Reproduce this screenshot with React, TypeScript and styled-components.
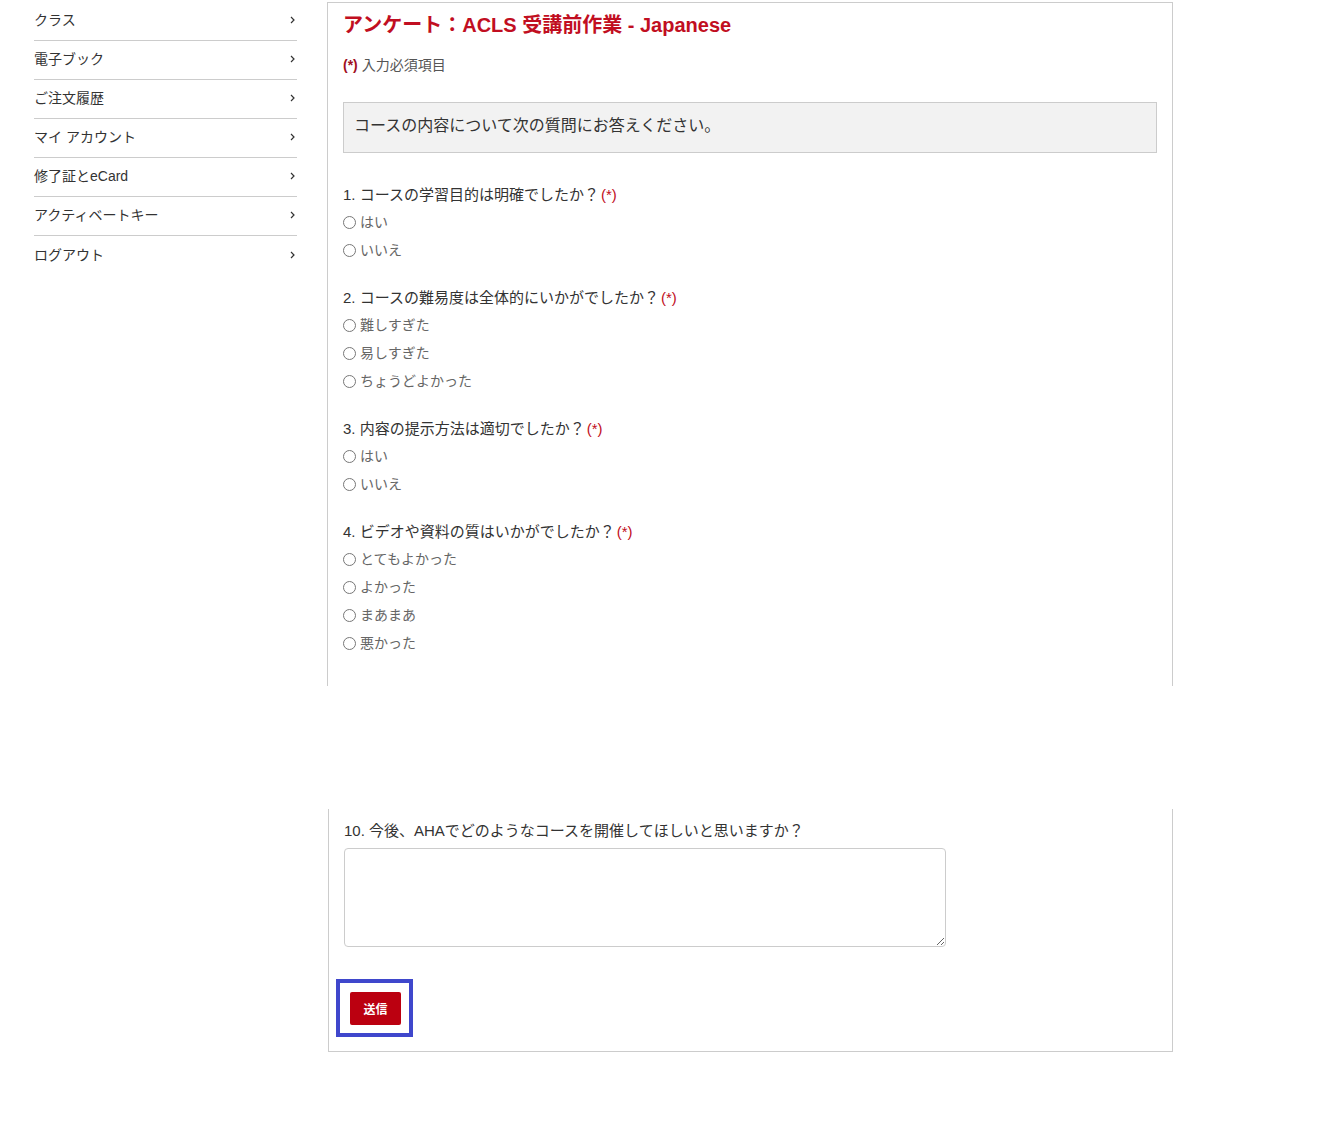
import styled, { createGlobalStyle } from "styled-components";

const GlobalStyle = createGlobalStyle`
  body {
    margin: 0;
    background: #fff;
    font-family: "Liberation Sans", "Noto Sans CJK JP", sans-serif;
    color: #333;
  }
`;

const navItems = [
  "クラス",
  "電子ブック",
  "ご注文履歴",
  "マイ アカウント",
  "修了証とeCard",
  "アクティベートキー",
  "ログアウト",
];

const questions = [
  { label: "1. コースの学習目的は明確でしたか？", options: ["はい", "いいえ"] },
  {
    label: "2. コースの難易度は全体的にいかがでしたか？",
    options: ["難しすぎた", "易しすぎた", "ちょうどよかった"],
  },
  { label: "3. 内容の提示方法は適切でしたか？", options: ["はい", "いいえ"] },
  {
    label: "4. ビデオや資料の質はいかがでしたか？",
    options: ["とてもよかった", "よかった", "まあまあ", "悪かった"],
  },
];

export default function App() {
  return (
    <Page>
      <GlobalStyle />
      <Sidebar>
        {navItems.map((item) => (
          <NavItem key={item}>
            <span>{item}</span>
            <svg width="5" height="8" viewBox="0 0 5 8">
              <polyline points="1,1 4,4 1,7" fill="none" stroke="#333" strokeWidth="1.2" />
            </svg>
          </NavItem>
        ))}
      </Sidebar>
      <Main>
        <TopPanel>
          <Title>アンケート：ACLS 受講前作業 - Japanese</Title>
          <RequiredNote>
            <Req>(*)</Req> 入力必須項目
          </RequiredNote>
          <InfoBox>コースの内容について次の質問にお答えください。</InfoBox>
          <Questions>
            {questions.map((q, qi) => (
              <Question key={q.label}>
                <QuestionLabel>
                  {q.label}
                  <Star>(*)</Star>
                </QuestionLabel>
                {q.options.map((o) => (
                  <Option key={o}>
                    <Radio type="radio" name={`q${qi}`} />
                    {o}
                  </Option>
                ))}
              </Question>
            ))}
          </Questions>
        </TopPanel>
        <BottomPanel>
          <QuestionLabel>10. 今後、AHAでどのようなコースを開催してほしいと思いますか？</QuestionLabel>
          <TextArea />
          <FocusFrame>
            <Submit>送信</Submit>
          </FocusFrame>
        </BottomPanel>
      </Main>
    </Page>
  );
}

const Page = styled.div`
  display: flex;
  gap: 30px;
  padding-left: 34px;
  padding-bottom: 72px;
`;

const Sidebar = styled.nav`
  width: 263px;
  flex-shrink: 0;
  margin-top: 2px;
  display: flex;
  flex-direction: column;
`;

const NavItem = styled.div`
  box-sizing: border-box;
  display: flex;
  align-items: center;
  justify-content: space-between;
  height: 39px;
  padding: 0 2px 4px 0;
  font-size: 14px;
  color: #333;
  border-bottom: 1px solid #ccc;
  &:last-child {
    border-bottom: none;
  }
  svg {
    margin-top: 2px;
  }
`;

const Main = styled.div`
  width: 846px;
  margin-top: 2px;
  display: flex;
  flex-direction: column;
`;

const TopPanel = styled.section`
  box-sizing: border-box;
  border: 1px solid #ccc;
  border-bottom: none;
  padding: 8px 15px 32px;
`;

const BottomPanel = styled.section`
  box-sizing: border-box;
  margin: 123px 0 0 1px;
  border: 1px solid #ccc;
  border-top: none;
  padding: 12px 15px 14px;
`;

const Title = styled.h1`
  margin: 0;
  font-size: 20px;
  line-height: 28px;
  font-weight: bold;
  color: #c10e21;
`;

const RequiredNote = styled.div`
  margin-top: 16px;
  font-size: 14px;
  line-height: 20px;
  color: #555;
`;

const Req = styled.span`
  color: #a0101e;
  font-weight: bold;
`;

const InfoBox = styled.div`
  margin-top: 27px;
  background: #f2f2f2;
  border: 1px solid #ccc;
  padding: 11px 10px 14px;
  font-size: 16px;
  line-height: 24px;
  color: #333;
`;

const Questions = styled.div`
  margin-top: 32px;
  display: flex;
  flex-direction: column;
  gap: 27px;
`;

const Question = styled.div`
  display: flex;
  flex-direction: column;
  gap: 7px;
`;

const QuestionLabel = styled.div`
  font-size: 15px;
  line-height: 20px;
  color: #333;
`;

const Star = styled.span`
  margin-left: 2px;
  color: #c10e21;
`;

const Option = styled.label`
  display: flex;
  align-items: center;
  font-size: 14px;
  line-height: 21px;
  color: #666;
`;

const Radio = styled.input`
  appearance: none;
  box-sizing: border-box;
  width: 13px;
  height: 13px;
  margin: 0 4px 0 0;
  border: 1px solid #777;
  border-radius: 50%;
  background: #fff;
`;

const TextArea = styled.textarea`
  display: block;
  box-sizing: border-box;
  width: 602px;
  height: 99px;
  margin-top: 7px;
  border: 1px solid #ccc;
  border-radius: 4px;
  resize: vertical;
`;

const FocusFrame = styled.div`
  display: inline-block;
  margin: 32px 0 0 -8px;
  padding: 9px 8px 8px 10px;
  border: 4px solid #3f47cc;
  line-height: 0;
`;

const Submit = styled.button`
  display: block;
  width: 51px;
  height: 33px;
  border: none;
  border-radius: 2px;
  background: #bb0010;
  color: #fff;
  font-family: "Liberation Sans", "Noto Sans CJK JP", sans-serif;
  font-size: 12px;
  font-weight: bold;
`;
